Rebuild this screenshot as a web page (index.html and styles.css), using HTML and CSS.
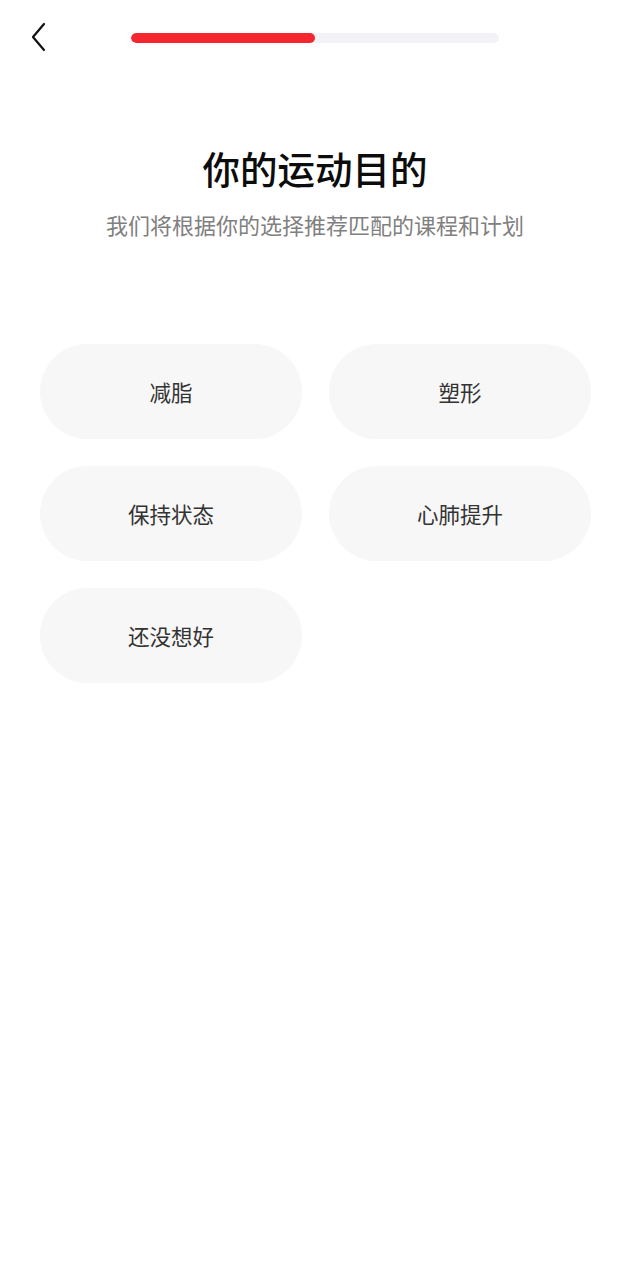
FILE: index.html
```html
<!DOCTYPE html>
<html lang="zh">
<head>
<meta charset="utf-8">
<link rel="stylesheet" href="styles.css">
</head>
<body>
<div class="page">
  <header class="topbar">
    <div class="back">
      <svg width="20" height="34" viewBox="0 0 20 34"><path d="M15 4 L4 17 L15 30" fill="none" stroke="#111" stroke-width="2.2" stroke-linecap="round" stroke-linejoin="round"/></svg>
    </div>
    <div class="progress"><div class="progress-fill" style="width:50%"></div></div>
  </header>
  <section class="intro">
    <h1 class="title">你的运动目的</h1>
    <p class="subtitle">我们将根据你的选择推荐匹配的课程和计划</p>
  </section>
  <section class="options">
    <div class="option">减脂</div>
    <div class="option">塑形</div>
    <div class="option">保持状态</div>
    <div class="option">心肺提升</div>
    <div class="option">还没想好</div>
  </section>
</div>
</body>
</html>
```

FILE: styles.css
```css
* { box-sizing: border-box; }
html, body { margin: 0; padding: 0; background: #fff; }
body { font-family: "Noto Sans CJK SC", "Noto Sans", sans-serif; color: #111; }
.page { width: 630px; min-height: 1280px; position: relative; }
.topbar { height: 76px; position: relative; display: flex; justify-content: center; align-items: center; }
.back { position: absolute; left: 29px; top: 20px; width: 20px; height: 34px; }
.back svg { display: block; }
.progress { width: 368px; height: 10px; border-radius: 5px; background: #f3f3f7; overflow: hidden; }
.progress-fill { height: 100%; background: #f5262e; border-radius: 5px; }
.intro { text-align: center; padding-top: 66px; }
.title { margin: 0; font-size: 37.5px; font-weight: 500; line-height: 52px; color: #0c0c0c; }
.subtitle { margin: 15px 0 0; font-size: 22px; line-height: 30px; color: #808080; }
.options { display: grid; grid-template-columns: 262px 262px; column-gap: 27px; row-gap: 27px; padding: 105px 0 0 40px; }
.option { height: 95px; border-radius: 48px; background: #f7f7f7; display: flex; align-items: center; justify-content: center; font-size: 21.5px; color: #333; }
```
